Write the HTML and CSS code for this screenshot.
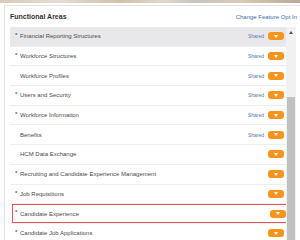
FILE: index.html
```html
<!DOCTYPE html>
<html lang="en">
<head>
    <meta charset="UTF-8">
    <meta name="viewport" content="width=device-width, initial-scale=1.0">
    <title>Functional Areas</title>
    <link rel="stylesheet" href="styles.css">
</head>
<body>
    <div class="banner"></div>

    <div class="card">
        <div class="card-head">
            <h1>Functional Areas</h1>
            <a href="#" class="opt-link">Change Feature Opt In</a>
        </div>

        <div class="card-body">
            <ul class="area-list">
                <li class="area-row selected">
                    <span class="star">*</span>
                    <span class="name">Financial Reporting Structures</span>
                    <span class="shared">Shared</span>
                    <span class="drop"></span>
                </li>
                <li class="area-row">
                    <span class="star">*</span>
                    <span class="name">Workforce Structures</span>
                    <span class="shared">Shared</span>
                    <span class="drop"></span>
                </li>
                <li class="area-row">
                    <span class="star"></span>
                    <span class="name">Workforce Profiles</span>
                    <span class="shared">Shared</span>
                    <span class="drop"></span>
                </li>
                <li class="area-row">
                    <span class="star">*</span>
                    <span class="name">Users and Security</span>
                    <span class="shared">Shared</span>
                    <span class="drop"></span>
                </li>
                <li class="area-row">
                    <span class="star">*</span>
                    <span class="name">Workforce Information</span>
                    <span class="shared">Shared</span>
                    <span class="drop"></span>
                </li>
                <li class="area-row">
                    <span class="star"></span>
                    <span class="name">Benefits</span>
                    <span class="shared">Shared</span>
                    <span class="drop"></span>
                </li>
                <li class="area-row">
                    <span class="star"></span>
                    <span class="name">HCM Data Exchange</span>
                    <span class="drop"></span>
                </li>
                <li class="area-row">
                    <span class="star">*</span>
                    <span class="name">Recruiting and Candidate Experience Management</span>
                    <span class="drop"></span>
                </li>
                <li class="area-row">
                    <span class="star">*</span>
                    <span class="name">Job Requisitions</span>
                    <span class="drop"></span>
                </li>
                <li class="area-row marked">
                    <span class="star">*</span>
                    <span class="name">Candidate Experience</span>
                    <span class="drop"></span>
                </li>
                <li class="area-row">
                    <span class="star">*</span>
                    <span class="name">Candidate Job Applications</span>
                    <span class="drop"></span>
                </li>
            </ul>

            <div class="scrollbar">
                <div class="scroll-up"></div>
                <div class="scroll-thumb"></div>
            </div>
        </div>
    </div>
</body>
</html>
```

FILE: styles.css
```css
body {
    margin: 0;
    font-family: "Liberation Sans", Arial, sans-serif;
    background: #ffffff;
    color: #444;
    overflow: hidden;
}
.banner {
    height: 3px;
    background: linear-gradient(90deg, #d8ccb8 0%, #e6ddcf 20%, #cfc2ad 40%, #e2d8c9 55%, #c9c4c0 65%, #d8cbb8 80%, #bda996 100%);
}
.card {
    margin: 2px 0 0 4px;
    border: 1px solid #e2e2e2;
    border-right: none;
    border-bottom: none;
    background: #fff;
    padding-left: 5px;
}
.card-head {
    display: flex;
    justify-content: space-between;
    align-items: center;
    height: 21px;
    padding-right: 3px;
}
.card-head h1 {
    margin: 0;
    font-size: 7px;
    font-weight: bold;
    color: #333;
}
.opt-link {
    font-size: 6px;
    color: #3572a8;
    text-decoration: none;
}
.card-body {
    display: flex;
    width: 286px;
}
.area-list {
    list-style: none;
    margin: 0;
    padding: 0;
    flex: 1;
}
.area-row {
    display: flex;
    align-items: center;
    height: 19.7px;
    box-sizing: border-box;
    border-bottom: 1px solid #eeeeee;
    padding: 0 2px 0 5px;
}
.area-row.selected {
    background: #e8e8ea;
}
.area-row.marked {
    box-shadow: inset 0 0 0 1px #e4555b;
    margin-left: 2px;
    margin-right: -2px;
    padding-left: 3px;
}
.star {
    width: 5px;
    font-size: 6px;
    color: #2b6cb0;
    font-weight: bold;
    align-self: flex-start;
    padding-top: 5px;
}
.name {
    flex: 1;
    font-size: 6px;
    color: #4a4a4a;
    white-space: nowrap;
}
.shared {
    font-size: 5px;
    color: #4f7ca6;
    margin-right: 4px;
}
.drop {
    width: 16px;
    height: 8px;
    border-radius: 3px;
    background: #f7941d;
    display: flex;
    align-items: center;
    justify-content: center;
}
.drop::after {
    content: "";
    border-left: 2.5px solid transparent;
    border-right: 2.5px solid transparent;
    border-top: 3px solid #fff;
}
.scrollbar {
    width: 10px;
    background: #f1f1f1;
    display: flex;
    flex-direction: column;
    align-items: center;
}
.scroll-up {
    margin-top: 4px;
    width: 0;
    border-left: 2.5px solid transparent;
    border-right: 2.5px solid transparent;
    border-bottom: 3px solid #555;
}
.scroll-thumb {
    margin-top: 63px;
    width: 8px;
    flex: 1;
    background: #c1c1c1;
}
```
